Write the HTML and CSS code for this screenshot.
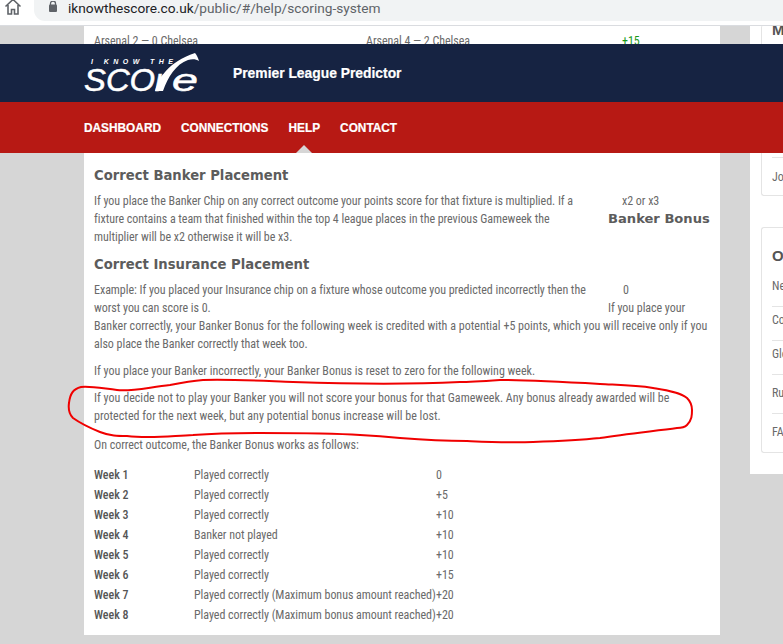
FILE: index.html
```html
<!DOCTYPE html>
<html lang="en">
<head>
<meta charset="utf-8">
<title>Scoring System</title>
<link rel="stylesheet" href="styles.css">
</head>
<body>
<div class="browser">
  <svg class="home" width="18" height="15" viewBox="0 0 18 15"><path d="M1.500 6.500 9 -0.500l7.500 7M4 5v9h3.500V9.500h3V14H14V5" fill="none" stroke="#5f6368" stroke-width="1.600"/></svg>
  <div class="omnibox">
    <svg class="lock" width="10" height="12" viewBox="0 0 10 12"><path d="M2.500 4V2.500a2.500 2.500 0 0 1 5 0V4" fill="none" stroke="#5f6368" stroke-width="1.300"/><rect x="1" y="3.500" width="8" height="7.500" rx="1" fill="#5f6368"/></svg>
    <span class="url"><span class="host">iknowthescore.co.uk</span>/public/#/help/scoring-system</span>
  </div>
</div>

<div class="page">
  <main class="content">
    <div class="line first"><span class="a">Arsenal 2 — 0 Chelsea</span><span class="b">Arsenal 4 — 2 Chelsea</span><span class="plus">+15</span></div>

    <h2 class="h-first">Correct Banker Placement</h2>
    <div class="line"><span class="t">If you place the Banker Chip on any correct outcome your points score for that fixture is multiplied. If a</span><span class="aside pad">x2 or x3</span></div>
    <div class="line"><span class="t">fixture contains a team that finished within the top 4 league places in the previous Gameweek the</span><span class="aside bold">Banker Bonus</span></div>
    <div class="line">multiplier will be x2 otherwise it will be x3.</div>

    <h2>Correct Insurance Placement</h2>
    <div class="line"><span class="t">Example: If you placed your Insurance chip on a fixture whose outcome you predicted incorrectly then the</span><span class="aside zero">0</span></div>
    <div class="line"><span class="t">worst you can score is 0.</span><span class="aside">If you place your</span></div>
    <div class="line wide">Banker correctly, your Banker Bonus for the following week is credited with a potential +5 points, which you will receive only if you</div>
    <div class="line">also place the Banker correctly that week too.</div>

    <p class="para reset">If you place your Banker incorrectly, your Banker Bonus is reset to zero for the following week.</p>
    <p class="para tight wide">If you decide not to play your Banker you will not score your bonus for that Gameweek. Any bonus already awarded will be<br>protected for the next week, but any potential bonus increase will be lost.</p>
    <p class="para after">On correct outcome, the Banker Bonus works as follows:</p>

    <table class="weeks">
      <tr><th>Week 1</th><td>Played correctly</td><td>0</td></tr>
      <tr><th>Week 2</th><td>Played correctly</td><td>+5</td></tr>
      <tr><th>Week 3</th><td>Played correctly</td><td>+10</td></tr>
      <tr><th>Week 4</th><td>Banker not played</td><td>+10</td></tr>
      <tr><th>Week 5</th><td>Played correctly</td><td>+10</td></tr>
      <tr><th>Week 6</th><td>Played correctly</td><td>+15</td></tr>
      <tr><th>Week 7</th><td>Played correctly (Maximum bonus amount reached)</td><td>+20</td></tr>
      <tr><th>Week 8</th><td>Played correctly (Maximum bonus amount reached)</td><td>+20</td></tr>
    </table>
  </main>

  <aside class="side">
    <section class="card card-top">
      <h3>My Leagues</h3>
      <div class="row last">John</div>
    </section>
    <section class="card card-other">
      <h3>Other</h3>
      <div class="row r1">News</div>
      <div class="row r2">Contact</div>
      <div class="row r3">Glossary</div>
      <div class="row r4">Rules</div>
      <div class="row r5">FAQ</div>
    </section>
  </aside>
</div>

<header class="masthead">
  <div class="brand">
    <svg class="logo" width="116" height="40" viewBox="0 0 116 40">
      <text x="7" y="11" class="logo-small" textLength="82" lengthAdjust="spacing">I KNOW THE</text>
      <text x="0" y="38" class="logo-big" textLength="82" lengthAdjust="spacingAndGlyphs">SCOr</text>
      <text x="88" y="38" class="logo-big" textLength="26" lengthAdjust="spacingAndGlyphs">e</text>
      <path d="M71 38C75 25 84 9 111 0c2 2 3 5 4 8-3-2-7-2-11-1C92 11 84 24 79 38Z" fill="#fff"/>
    </svg>
    <span class="title">Premier League Predictor</span>
  </div>
  <nav class="nav">
    <a>DASHBOARD</a><a>CONNECTIONS</a><a class="current">HELP</a><a>CONTACT</a>
  </nav>
</header>

<svg class="scribble" width="783" height="644" viewBox="0 0 783 644">
  <path d="M117 390C100 388 90 386 81 387C73 389 70 394 69 403C68 410 70 415 73 418C80 423 90 428 100 432C110 436 118 436 127 436C150 439 170 436 193 435C220 433 240 433 260 433C290 433 330 433 360 435C380 436 390 437 400 438C425 440 445 441 467 441C490 442 510 443 533 442C560 441 580 440 600 438C625 434 655 431 677 428C682 428 685 427 687 425C692 420 692 415 692 410C692 404 690 401 687 398C680 392 665 390 653 388C635 385 620 385 600 384C565 382 530 380 500 380C485 381 470 382 460 382C420 384 350 384 293 382C265 381 230 379 203 380C190 381 180 383 170 385C150 387 130 392 117 390Z" fill="none" stroke="#f00000" stroke-width="2"/>
</svg>
</body>
</html>
```

FILE: styles.css
```css
* { box-sizing: border-box; }
html, body { margin: 0; height: 644px; overflow: hidden; }
body {
  position: relative;
  background: #d6d6d6;
  font-family: "Roboto", sans-serif;
  font-stretch: 75%;
  font-size: 12px;
  letter-spacing: -.04px;
  line-height: 18px;
  color: #6a6a6a;
}
.browser {
  display: flex;
  height: 26px;
  background: #fff;
  border-bottom: 1px solid #dadce0;
  padding-bottom: 4px;
}
.home { margin: 0 0 0 4px; flex: none; }
.omnibox {
  flex: 1;
  margin-left: 12px;
  display: flex;
  align-items: center;
  gap: 10px;
  padding-left: 14px;
  background: #f1f3f4;
  border-bottom-left-radius: 11px;
}
.lock { margin-top: -7px; }
.url {
  margin-top: -5px;
  font-size: 13.700px;
  font-stretch: 100%;
  letter-spacing: 0;
  color: #5f6368;
  white-space: nowrap;
}
.host { color: #202124; }

.page { display: flex; padding-left: 84px; height: 609px; align-items: flex-start; }
.content { width: 636px; height: 609px; background: #fff; padding: 6px 10px 0; flex: none; }
.line { display: flex; height: 18px; white-space: nowrap; }
.wide { letter-spacing: .02px; }
.reset { letter-spacing: -.01px; }
.t { width: 514px; flex: none; }
.a { width: 272px; }
.b { width: 256px; }
.plus { color: #1a9a1a; }
.aside.pad { padding-left: 14px; }
.aside.zero { padding-left: 15px; }
.aside.bold { font: bold 13.100px/18px "DejaVu Sans", sans-serif; letter-spacing: 0; color: #5c5c5c; }
h2 {
  margin: 10px 0 7px;
  font: bold 13.200px/18px "DejaVu Sans", sans-serif;
  letter-spacing: 0;
  color: #5c5c5c;
}
.h-first { margin-top: 117px; }
.para { margin: 9px 0 0; }
.para.tight { margin-top: 9px; }
.para.after { margin-top: 11px; }
.weeks { margin-top: 11px; border-collapse: collapse; white-space: nowrap; }
.weeks th, .weeks td { padding: 0; height: 20px; text-align: left; font-weight: normal; }
.weeks th { width: 100px; color: #555; font-weight: 500; }
.weeks td:nth-child(2) { width: 242px; }

.side {
  margin-left: 30px;
  flex: 1;
  height: 448px;
  background: #fff;
  padding-left: 11px;
  overflow: hidden;
}
.card {
  border: 1px solid #e4e4e4;
  border-right: 0;
  border-radius: 3px 0 0 3px;
  padding-left: 10px;
  white-space: nowrap;
}
.card h3 { margin: 0; font: bold 15px/18px "Liberation Sans", sans-serif; letter-spacing: 0; color: #555; }
.card-top { height: 171px; margin-top: -1px; border-top: 0; }
.card-top h3 { line-height: 10px; }
.card-other { height: 226px; margin-top: 31px; padding-top: 19px; }
.row { border-bottom: 1px solid #e4e4e4; }
.card-top .row.last { margin-top: 122px; padding-top: 10px; border-top: 1px solid #e4e4e4; border-bottom: 0; }
.row.r1 { height: 42px; padding-top: 12px; }
.row.r2 { height: 34px; padding-top: 4px; }
.row.r3 { height: 34px; padding-top: 4px; }
.row.r4 { height: 39px; padding-top: 9px; }
.row.r5 { border-bottom: 0; padding-top: 9px; }

.masthead { position: absolute; left: 0; top: 44px; width: 783px; letter-spacing: 0; }
.brand {
  height: 58px;
  background: #162342;
  display: flex;
  align-items: center;
  padding-left: 84px;
  gap: 33px;
  color: #fff;
}
.logo { flex: none; }
.logo-small { font: italic bold 7px "Liberation Sans", sans-serif; fill: #fff; }
.logo-big { font: italic normal 31px "Liberation Sans", sans-serif; fill: #fff; stroke: #fff; stroke-width: .5px; }
.title { font: bold 13.850px "Liberation Sans", sans-serif; -webkit-text-stroke: .2px #fff; }
.nav {
  height: 51px;
  background: #b71914;
  display: flex;
  gap: 20px;
  padding-left: 84px;
  font: bold 11.850px/52px "Liberation Sans", sans-serif;
  color: #fff;
  -webkit-text-stroke: .2px #fff;
}
.current { position: relative; height: 51px; }
.current::after {
  content: "";
  position: absolute;
  left: 50%;
  bottom: 0;
  margin-left: -8px;
  border: 8px solid transparent;
  border-top: 0;
  border-bottom-color: #d6d6d6;
}
.scribble { position: absolute; left: 0; top: 0; pointer-events: none; }
```
